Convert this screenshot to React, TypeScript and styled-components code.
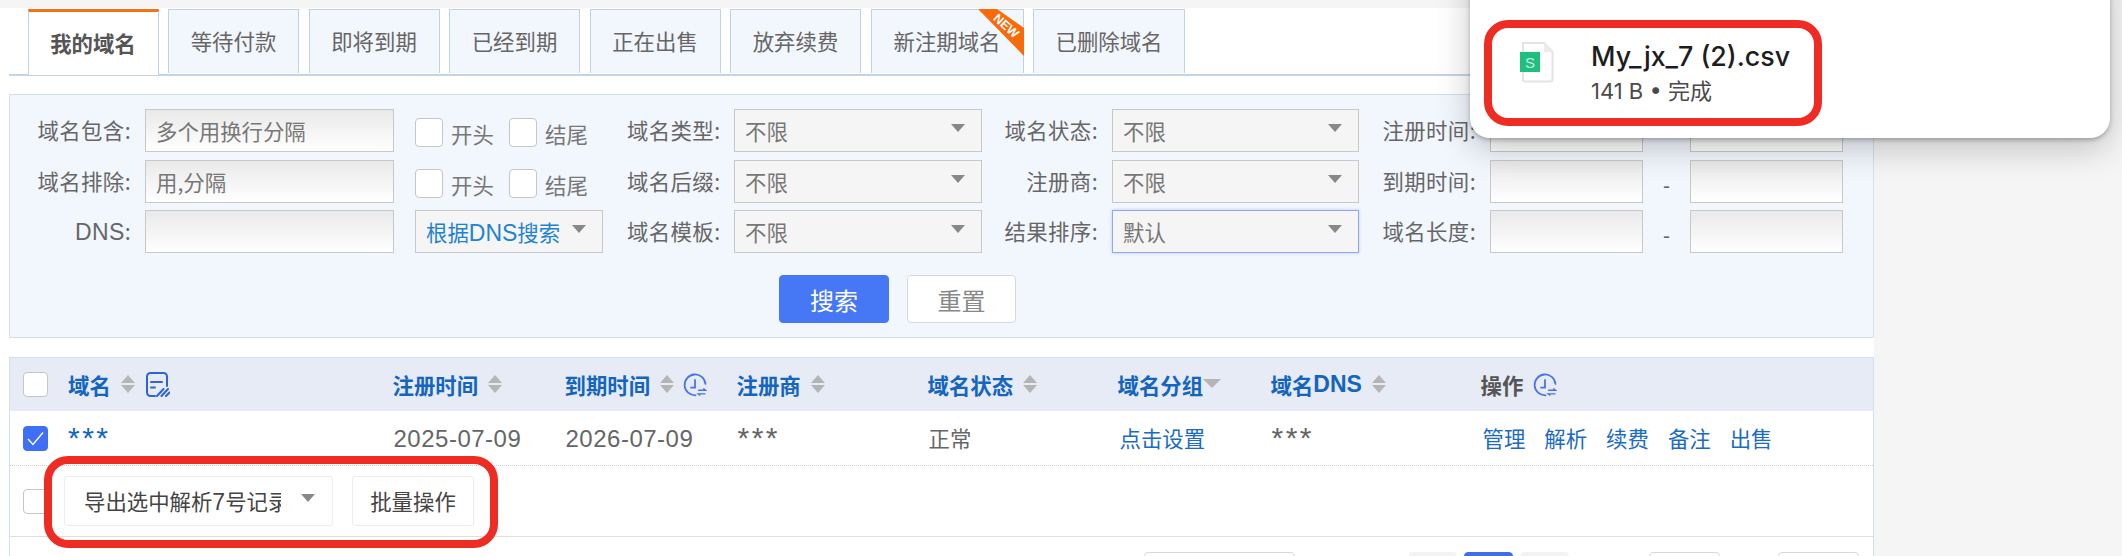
import styled, { createGlobalStyle } from "styled-components";

const CJK = `"Noto Sans CJK SC", "Liberation Sans", sans-serif`;
const COLS = "45px 324.5px 172px 172px 191px 190px 153px 210px 1fr";

const Global = createGlobalStyle`
  html, body {
    margin: 0;
    width: 2122px;
    height: 556px;
    overflow: hidden;
    background: #f5f5f5;
  }
  * { box-sizing: border-box; }
`;

const Page = styled.div`
  position: relative;
  width: 2122px;
  height: 556px;
  overflow: hidden;
  padding-top: 8px;
  font-family: ${CJK};
  font-size: 21px;
  color: #666;
`;

const Main = styled.main`
  width: 1874px;
  height: 548px;
  background: #fff;
  padding-left: 9px;
`;

const TabBar = styled.div`
  display: flex;
  gap: 9.5px;
  height: 68px;
  padding: 1px 0 0 18.5px;
  border-bottom: 2px solid #c4d4e4;
`;

const Tab = styled.div<{ $w: number; $active?: boolean }>`
  position: relative;
  width: ${(p) => p.$w}px;
  height: ${(p) => (p.$active ? 66 : 64)}px;
  display: flex;
  align-items: center;
  justify-content: center;
  padding-bottom: 2px;
  font-size: 21.4px;
  font-weight: ${(p) => (p.$active ? 700 : 400)};
  color: ${(p) => (p.$active ? "#555" : "#666")};
  background: ${(p) => (p.$active ? "#fff" : "#f2f6fd")};
  border: 1px solid #bfd2e6;
  border-bottom: ${(p) => (p.$active ? "0" : "none")};
  border-top: ${(p) => (p.$active ? "3px solid #f47216" : "1px solid #bfd2e6")};
`;

const Ribbon = styled.svg`
  position: absolute;
  top: -1px;
  right: -1px;
`;

const Panel = styled.section`
  margin-top: 18px;
  height: 244px;
  padding-top: 14px;
  background: #f2f6fd;
  border: 1px solid #d3dfef;
`;

const FilterRow = styled.div<{ $mb: number }>`
  display: flex;
  align-items: center;
  height: 43px;
  margin-bottom: ${(p) => p.$mb}px;
`;

const Label = styled.label<{ $w: number; $ml?: number }>`
  flex: none;
  width: ${(p) => p.$w}px;
  height: 43px;
  margin-left: ${(p) => p.$ml ?? 0}px;
  margin-right: 14px;
  text-align: right;
  white-space: nowrap;
  font-size: 21.4px;
  letter-spacing: 0.4px;
  line-height: 42px;
  color: #666;
`;

const TextInput = styled.input<{ $w: number }>`
  flex: none;
  width: ${(p) => p.$w}px;
  height: 43px;
  padding: 0 10px;
  border: 1px solid #c8c8c8;
  background: linear-gradient(#e9e9e9, #ffffff);
  font: 21.4px ${CJK};
  color: #666;
  outline: none;
  &::placeholder { color: #777; opacity: 1; }
`;

const Select = styled.div<{ $w: number; $ml?: number; $focus?: boolean; $blue?: boolean }>`
  flex: none;
  display: flex;
  align-items: center;
  justify-content: space-between;
  width: ${(p) => p.$w}px;
  height: 43px;
  margin-left: ${(p) => p.$ml ?? 0}px;
  padding: 0 16px 1px 10px;
  white-space: nowrap;
  font-size: 21.4px;
  color: ${(p) => (p.$blue ? "#1f83d2" : "#777")};
  background: #f5f5f5;
  border: 1px solid ${(p) => (p.$focus ? "#8fa8ec" : "#c8c8c8")};
  box-shadow: ${(p) => (p.$focus ? "0 0 3px rgba(90,120,230,.35)" : "none")};
`;

const Caret = styled.i`
  flex: none;
  width: 0;
  height: 0;
  margin-top: -4px;
  border-left: 7px solid transparent;
  border-right: 7px solid transparent;
  border-top: 8px solid #888;
`;

const Latin = styled.span`
  font-family: "Liberation Sans", sans-serif;
  font-size: 23px;
`;

const Box = styled.span<{ $checked?: boolean; $big?: boolean }>`
  flex: none;
  display: inline-flex;
  align-items: center;
  justify-content: center;
  width: ${(p) => (p.$big ? 25 : 28)}px;
  height: ${(p) => (p.$big ? 25 : 29)}px;
  background: ${(p) => (p.$checked ? "#3f6ff5" : "#fff")};
  border: 1px solid ${(p) => (p.$checked ? "#3f6ff5" : "#c6c6c6")};
  border-radius: 4px;
`;

const CheckGroup = styled.div`
  flex: none;
  display: flex;
  align-items: center;
  width: 188px;
  margin-left: 21px;
  padding-top: 3px;
`;

const CheckText = styled.span<{ $w: number }>`
  width: ${(p) => p.$w}px;
  padding: 2px 0 0 8px;
  font-size: 21.4px;
  color: #777;
`;

const Dash = styled.span`
  flex: none;
  width: 47px;
  padding-top: 8px;
  text-align: center;
  font-family: "Liberation Sans", sans-serif;
  color: #666;
`;

const Actions = styled.div`
  display: flex;
  gap: 18px;
  margin: 22px 0 0 769px;
`;

const Btn = styled.button<{ $primary?: boolean }>`
  width: ${(p) => (p.$primary ? 110 : 109)}px;
  height: 48px;
  padding: 0;
  font: 24px ${CJK};
  color: ${(p) => (p.$primary ? "#fff" : "#888")};
  background: ${(p) => (p.$primary ? "#4677f5" : "#fff")};
  border: 1px solid ${(p) => (p.$primary ? "#4677f5" : "#d8d8d8")};
  border-radius: 4px;
`;

const Table = styled.section`
  margin-top: 19px;
  height: 200px;
  border-left: 1px solid #d3dfef;
  border-right: 1px solid #d3dfef;
`;

const HeadRow = styled.div`
  display: grid;
  grid-template-columns: ${COLS};
  align-items: center;
  height: 54px;
  padding-left: 13px;
  background: #e6ebf5;
  border-top: 1px solid #d3dfef;
`;

const HeadCell = styled.div<{ $dark?: boolean }>`
  display: flex;
  align-items: center;
  white-space: nowrap;
  font-size: 21.4px;
  font-weight: 700;
  color: ${(p) => (p.$dark ? "#555" : "#1465c0")};
`;

const Sort = styled.span`
  display: inline-flex;
  flex-direction: column;
  gap: 2px;
  margin: -2px 0 0 10px;
  &::before, &::after {
    content: "";
    width: 0;
    height: 0;
    border-left: 7px solid transparent;
    border-right: 7px solid transparent;
  }
  &::before { border-bottom: 8px solid #b5b5b5; }
  &::after { border-top: 8px solid #b5b5b5; }
`;

const SortDown = styled.i`
  width: 0;
  height: 0;
  margin-top: -2px;
  border-left: 9px solid transparent;
  border-right: 9px solid transparent;
  border-top: 9px solid #b5b5b5;
`;

const HeadIcon = styled.svg<{ $ml: number }>`
  flex: none;
  margin-left: ${(p) => p.$ml}px;
`;

const DataRow = styled.div`
  display: grid;
  grid-template-columns: ${COLS};
  align-items: center;
  height: 55px;
  padding-left: 13px;
  border-bottom: 1px dotted #cfcfcf;
`;

const Cell = styled.div<{ $blue?: boolean; $nudge?: number }>`
  padding-left: ${(p) => p.$nudge ?? 1}px;
  padding-bottom: 1px;
  white-space: nowrap;
  font-size: 21.4px;
  color: ${(p) => (p.$blue ? "#1a6bc4" : "#666")};
`;

const Masked = styled.span<{ $blue?: boolean }>`
  display: inline-block;
  margin-top: 1px;
  vertical-align: top;
  line-height: 1;
  font-family: "Liberation Sans", sans-serif;
  font-size: 30px;
  letter-spacing: 2.5px;
  color: ${(p) => (p.$blue ? "#1465c0" : "#666")};
`;

const Date = styled.span`
  font-family: "Liberation Sans", sans-serif;
  font-size: 24px;
  letter-spacing: 0.5px;
  color: #666;
`;

const Links = styled.div`
  display: flex;
  gap: 19px;
  padding: 0 0 1px 2px;
  font-size: 21.4px;
  color: #1a6bc4;
`;

const Footer = styled.div`
  position: relative;
  display: flex;
  align-items: center;
  height: 71px;
  padding-left: 13px;
  border-bottom: 1px solid #dfdfdf;
`;

const ExportSelect = styled.div`
  display: flex;
  align-items: center;
  justify-content: space-between;
  width: 269px;
  height: 50px;
  margin-left: 16px;
  padding: 0 17px 2px 19px;
  font-size: 21.4px;
  color: #444;
  background: #fff;
  border: 1px solid #ececec;
  border-radius: 3px;
`;

const ExportText = styled.span`
  width: 197px;
  overflow: hidden;
  white-space: nowrap;
`;

const BatchBtn = styled.button`
  width: 122px;
  height: 50px;
  margin-left: 19px;
  padding: 0 0 2px;
  font: 21.4px ${CJK};
  color: #444;
  background: #fff;
  border: 1px solid #ececec;
  border-radius: 3px;
`;

const Mark = styled.div`
  position: absolute;
  border: 8px solid #ee2c24;
  border-radius: 24px;
  pointer-events: none;
`;

const FooterMark = styled(Mark)`
  left: 34px;
  top: -10px;
  width: 454px;
  height: 92px;
`;

const Pager = styled.div`
  display: flex;
  padding: 15px 0 0 1134px;
`;

const PageItem = styled.span<{ $w: number; $ml?: number; $tone?: "blue" | "grey" }>`
  flex: none;
  width: ${(p) => p.$w}px;
  height: 40px;
  margin-left: ${(p) => p.$ml ?? 0}px;
  border-radius: 4px;
  background: ${(p) => (p.$tone === "blue" ? "#3f6fe8" : p.$tone === "grey" ? "#f3f3f3" : "#fff")};
  border: 1px solid ${(p) => (p.$tone === "blue" ? "#3f6fe8" : p.$tone === "grey" ? "#f3f3f3" : "#d8d8d8")};
`;

const Popup = styled.aside`
  position: absolute;
  top: -40px;
  left: 1470px;
  width: 640px;
  height: 178px;
  padding: 82px 0 0 50px;
  display: flex;
  background: #fff;
  border-radius: 20px;
  box-shadow: 0 2px 4px rgba(0,0,0,.25), 0 10px 34px rgba(0,0,0,.22);
`;

const PopupMark = styled(Mark)`
  left: 14px;
  top: 60px;
  width: 338px;
  height: 106px;
`;

const FileInfo = styled.div`
  margin: -4px 0 0 37px;
  font-family: Inter, "Noto Sans CJK SC", sans-serif;
`;

const FileName = styled.div`
  font-size: 26.8px;
  font-weight: 500;
  line-height: 36px;
  color: #1d1d1f;
  white-space: nowrap;
`;

const FileMeta = styled.div`
  margin-top: 0;
  font-size: 22px;
  line-height: 34px;
  color: #4a4a4a;
  white-space: nowrap;
`;

const Sorted = ({ children }: { children: React.ReactNode }) => (
  <HeadCell>
    {children}
    <Sort />
  </HeadCell>
);

const ClockIcon = ({ ml }: { ml: number }) => (
  <HeadIcon $ml={ml} width="24" height="24" viewBox="0 0 23 23" fill="none" stroke="#4a73e8" strokeWidth="1.7">
    <path d="M21.5 10.500A10 10 0 1 0 12 21.400" strokeLinecap="round" />
    <path d="M11.500 6v8H7" />
    <path d="M14.500 16.500h7l-2-1.600M21.500 20h-7l2 1.600" strokeWidth="1.3" />
  </HeadIcon>
);

const NoteIcon = () => (
  <HeadIcon $ml={11} width="24" height="25" viewBox="0 0 24 25" fill="none" stroke="#2f63d8" strokeWidth="2">
    <path d="M21 14V4.500A3.500 3.500 0 0 0 17.500 1H4.500A3.500 3.500 0 0 0 1 4.500V20.500A3.500 3.500 0 0 0 4.500 24H9" strokeLinecap="round" />
    <path d="M5 10H16M5 15.500H9" strokeLinecap="round" />
    <path d="M11 24L17.500 17M15.500 24L22 17M20 24L23.500 20.500" strokeLinecap="round" />
  </HeadIcon>
);

const Tick = () => (
  <svg width="17" height="15" viewBox="0 0 17 15" fill="none" stroke="#fff" strokeWidth="1.4">
    <path d="M1 8l5 5.500L16 1.500" />
  </svg>
);

const SheetIcon = () => (
  <svg width="34" height="41" viewBox="0 0 34 41" style={{ flex: "none" }}>
    <path d="M3 1h21l8.500 9v27.500a2 2 0 0 1-2 2H5a2 2 0 0 1-2-2z" fill="#fff" stroke="#e4e4e4" strokeWidth="2" />
    <path d="M24 1v9h8.500z" fill="#ececec" />
    <rect x="0" y="10" width="20" height="20" fill="#1fbf80" />
    <text x="10" y="26" textAnchor="middle" fontFamily="Liberation Sans, sans-serif" fontSize="15" fill="#c9f3e0">S</text>
  </svg>
);

export default function App() {
  return (
    <Page>
      <Global />
      <Main>
        <TabBar>
          <Tab $w={131} $active>我的域名</Tab>
          <Tab $w={131}>等待付款</Tab>
          <Tab $w={131}>即将到期</Tab>
          <Tab $w={131}>已经到期</Tab>
          <Tab $w={131}>正在出售</Tab>
          <Tab $w={131}>放弃续费</Tab>
          <Tab $w={153}>
            新注期域名
            <Ribbon width="46" height="47" viewBox="0 0 46 47">
              <polygon points="0,0 19,0 46,19 46,47" fill="#f96a08" />
              <text x="28" y="17" transform="rotate(42 28 17)" textAnchor="middle" dominantBaseline="central" fontFamily="Liberation Sans, sans-serif" fontSize="12.500" fontWeight="700" fill="#fff">NEW</text>
            </Ribbon>
          </Tab>
          <Tab $w={152}>已删除域名</Tab>
        </TabBar>

        <Panel>
          <FilterRow $mb={8}>
            <Label $w={121}>域名包含:</Label>
            <TextInput $w={249} placeholder="多个用换行分隔" />
            <CheckGroup>
              <Box />
              <CheckText $w={66}>开头</CheckText>
              <Box />
              <CheckText $w={66}>结尾</CheckText>
            </CheckGroup>
            <Label $w={93} $ml={24}>域名类型:</Label>
            <Select $w={248}>不限<Caret /></Select>
            <Label $w={94} $ml={22}>域名状态:</Label>
            <Select $w={247}>不限<Caret /></Select>
            <Label $w={94} $ml={23}>注册时间:</Label>
            <TextInput $w={153} />
            <Dash />
            <TextInput $w={153} />
          </FilterRow>

          <FilterRow $mb={7}>
            <Label $w={121}>域名排除:</Label>
            <TextInput $w={249} placeholder="用,分隔" />
            <CheckGroup>
              <Box />
              <CheckText $w={66}>开头</CheckText>
              <Box />
              <CheckText $w={66}>结尾</CheckText>
            </CheckGroup>
            <Label $w={93} $ml={24}>域名后缀:</Label>
            <Select $w={248}>不限<Caret /></Select>
            <Label $w={94} $ml={22}>注册商:</Label>
            <Select $w={247}>不限<Caret /></Select>
            <Label $w={94} $ml={23}>到期时间:</Label>
            <TextInput $w={153} />
            <Dash>-</Dash>
            <TextInput $w={153} />
          </FilterRow>

          <FilterRow $mb={0}>
            <Label $w={121}><Latin>DNS</Latin>:</Label>
            <TextInput $w={249} />
            <Select $w={188} $ml={21} $blue><span>根据<Latin>DNS</Latin>搜索</span><Caret /></Select>
            <Label $w={93} $ml={24}>域名模板:</Label>
            <Select $w={248}>不限<Caret /></Select>
            <Label $w={94} $ml={22}>结果排序:</Label>
            <Select $w={247} $focus>默认<Caret /></Select>
            <Label $w={94} $ml={23}>域名长度:</Label>
            <TextInput $w={153} />
            <Dash>-</Dash>
            <TextInput $w={153} />
          </FilterRow>

          <Actions>
            <Btn $primary>搜索</Btn>
            <Btn>重置</Btn>
          </Actions>
        </Panel>

        <Table>
          <HeadRow>
            <Box $big />
            <HeadCell>域名<Sort /><NoteIcon /></HeadCell>
            <Sorted>注册时间</Sorted>
            <HeadCell>到期时间<Sort /><ClockIcon ml={9} /></HeadCell>
            <Sorted>注册商</Sorted>
            <Sorted>域名状态</Sorted>
            <HeadCell>域名分组<SortDown /></HeadCell>
            <Sorted>域名<Latin>DNS</Latin></Sorted>
            <HeadCell $dark>操作<ClockIcon ml={10} /></HeadCell>
          </HeadRow>

          <DataRow>
            <Box $big $checked><Tick /></Box>
            <Cell $nudge={0}><Masked $blue>***</Masked></Cell>
            <Cell><Date>2025-07-09</Date></Cell>
            <Cell><Date>2026-07-09</Date></Cell>
            <Cell><Masked>***</Masked></Cell>
            <Cell>正常</Cell>
            <Cell $blue $nudge={2}>点击设置</Cell>
            <Cell><Masked>***</Masked></Cell>
            <Links>
              <span>管理</span>
              <span>解析</span>
              <span>续费</span>
              <span>备注</span>
              <span>出售</span>
            </Links>
          </DataRow>

          <Footer>
            <Box $big />
            <ExportSelect>
              <ExportText>导出选中解析<Latin>7</Latin>号记录</ExportText>
              <Caret />
            </ExportSelect>
            <BatchBtn>批量操作</BatchBtn>
            <FooterMark />
          </Footer>

          <Pager>
            <PageItem $w={151} />
            <PageItem $w={48} $ml={114} $tone="grey" />
            <PageItem $w={49} $ml={7} $tone="blue" />
            <PageItem $w={49} $ml={7} $tone="grey" />
            <PageItem $w={71} $ml={80} />
            <PageItem $w={81} $ml={58} />
          </Pager>
        </Table>
      </Main>

      <Popup>
        <SheetIcon />
        <FileInfo>
          <FileName>My_jx_7 (2).csv</FileName>
          <FileMeta>141 B • 完成</FileMeta>
        </FileInfo>
        <PopupMark />
      </Popup>
    </Page>
  );
}
